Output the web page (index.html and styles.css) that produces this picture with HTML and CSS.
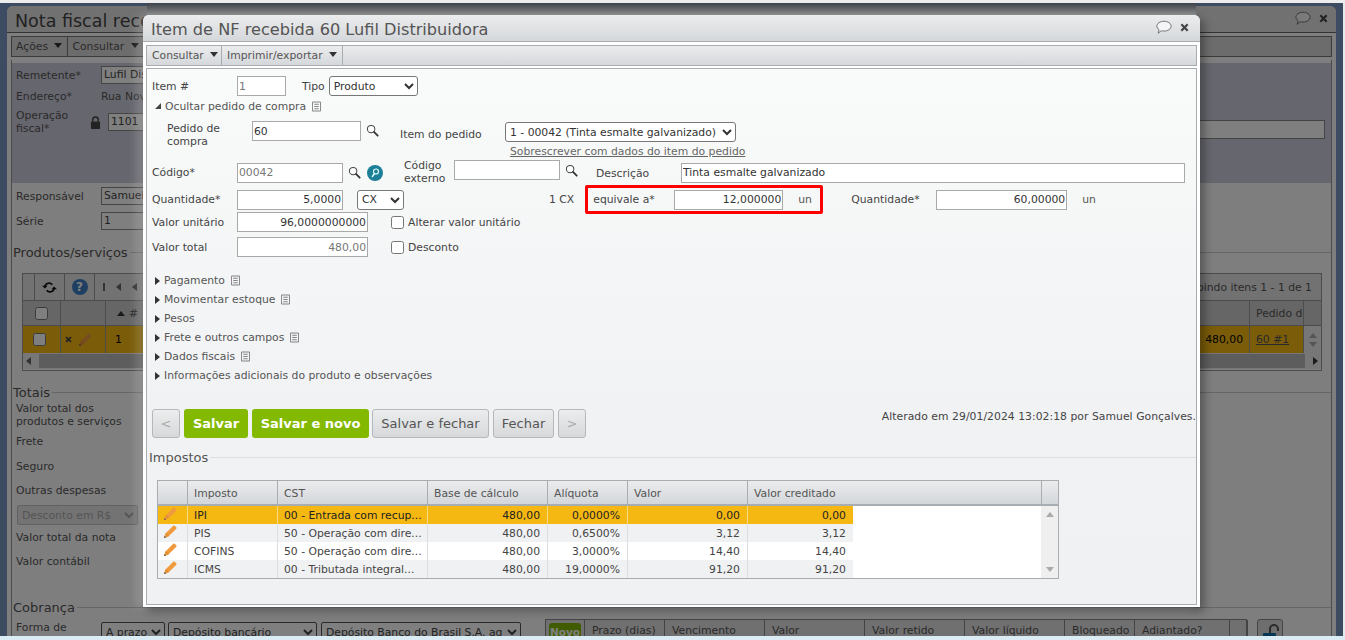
FILE: index.html
```html
<!DOCTYPE html>
<html lang="pt-BR">
<head>
<meta charset="utf-8">
<title>Item de NF recebida</title>
<link rel="stylesheet" href="styles.css">
</head>
<body>
<svg class="defs" xmlns="http://www.w3.org/2000/svg">
  <symbol id="lens" viewBox="0 0 14 14"><circle cx="5.500" cy="5.500" r="4" fill="#fff" stroke="#444" stroke-width="1.100"/><path d="M8.600 8.600l4 4" stroke="#333" stroke-width="1.900" stroke-linecap="round"/></symbol>
  <symbol id="note" viewBox="0 0 10 11"><path d="M.5.5h9v10h-9z" fill="none" stroke="#777"/><path d="M2.500 3h5M2.500 5.500h5M2.500 8h5" stroke="#777"/></symbol>
  <symbol id="pencil" viewBox="0 0 14 14"><path d="M1 13l1.200-4.200L10 1c.6-.6 1.200-.6 1.800-.1l1.300 1.200c.6.600.6 1.200 0 1.800L5.200 11.800z" fill="#f09a3e"/><path d="M2.800 8.600l2.600 2.600" stroke="#cf7a22" stroke-width=".8"/><path d="M1 13l.6-2.300 1.700 1.700z" fill="#6a5a48"/></symbol>
  <symbol id="bubble" viewBox="0 0 18 16"><path d="M9 1c4.300 0 8 2.300 8 5.500S13.300 12 9 12c-1 0-2-.1-3-.4L2.500 14.500l1-4C2 9.400 1 8 1 6.500 1 3.300 4.700 1 9 1z" fill="#f4f5f6" stroke="#666"/></symbol>
  <symbol id="close" viewBox="0 0 10 10"><path d="M1.500 1.500l7 7M8.500 1.500l-7 7" stroke="#444" stroke-width="2.400"/></symbol>
</svg>

<div class="strip-top"></div>
<div class="stage">
  <section class="bgwin">
    <header class="bg-title"><h1>Nota fiscal recebida</h1><span class="win-icons"><svg class="ic-bubble"><use href="#bubble"/></svg><svg class="ic-close"><use href="#close"/></svg></span></header>
    <nav class="bg-tools"><span class="tool t1">Ações <i class="tri-d"></i></span><span class="tool">Consultar <i class="tri-d"></i></span></nav>
    <div class="bg-band">
      <div class="b-row b-r1"><label class="b-lab">Remetente*</label><span class="b-field">Lufil Distribuidora</span></div>
      <div class="b-row b-r2"><label class="b-lab">Endereço*</label><span class="b-val">Rua Nova</span></div>
      <div class="b-row b-r3"><label class="b-lab b-two">Operação fiscal*</label><svg class="b-lock" viewBox="0 0 12 14"><path d="M3 6V4a3 3 0 016 0v2" fill="none" stroke="#444" stroke-width="1.600"/><rect x="1" y="6" width="10" height="8" rx="1" fill="#444"/></svg><span class="b-field b-op">1101</span><span class="b-field b-wide"></span></div>
    </div>
    <div class="b-row b-r4"><label class="b-lab">Responsável</label><span class="b-field">Samuel</span></div>
    <div class="b-row b-r5"><label class="b-lab">Série</label><span class="b-field">1</span></div>
    <div class="legend b-leg1"><span>Produtos/serviços</span></div>
    <div class="b-table">
      <div class="bt-tools"><span class="bt-sp1"></span><span class="bt-cell bt-ref"><svg viewBox="0 0 16 14"><path d="M3 6a4.500 4.500 0 018-2M13 8a4.500 4.500 0 01-8 2" fill="none" stroke="#111" stroke-width="1.800"/><path d="M0 5h6L3 8zM16 9h-6l3-3z" fill="#111"/></svg></span><span class="bt-cell bt-help">?</span><span class="bt-pager"><i class="bar"></i><i class="tri-l"></i><i class="tri-l"></i></span><span class="bt-show">Exibindo itens 1 - 1 de 1</span></div>
      <div class="bt-head"><span class="c-chk"><input type="checkbox"></span><span class="c-act"></span><span class="c-num"><i class="tri-u"></i> #</span><span class="c-fill"></span><span class="c-ped">Pedido de</span><span class="c-sb"></span></div>
      <div class="bt-row"><span class="c-chk"><input type="checkbox"></span><span class="c-act"><svg class="ic-x"><use href="#close"/></svg><svg class="ic-pen"><use href="#pencil"/></svg></span><span class="c-num">1</span><span class="c-fill c-amt">480,00</span><span class="c-ped"><a>60 #1</a></span><span class="c-sb c-sbv"><i class="tri-u"></i><i class="tri-dn"></i></span></div>
      <div class="bt-scroll"><i class="tri-l"></i><b></b><i class="tri-r"></i></div>
    </div>
    <div class="legend b-leg2"><span>Totais</span></div>
    <div class="b-col">
      <p class="p1">Valor total dos<br>produtos e serviços</p>
      <p class="p2">Frete</p><p class="p5">Seguro</p><p class="p3">Outras despesas</p>
      <select class="b-desc" disabled><option>Desconto em R$</option></select>
      <p class="p4">Valor total da nota</p><p class="p3">Valor contábil</p>
    </div>
    <div class="legend b-leg3"><span>Cobrança</span></div>
    <div class="b-bottom">
      <span class="b-forma">Forma de</span>
      <select class="s1"><option>A prazo</option></select><select class="s2"><option>Depósito bancário</option></select><select class="s3"><option>Depósito Banco do Brasil S.A. ag</option></select>
      <div class="b-ct"><span class="ct-new"><b>Novo</b></span><span class="w80">Prazo (dias)</span><span class="w100">Vencimento</span><span class="w100">Valor</span><span class="w100">Valor retido</span><span class="w100">Valor líquido</span><span class="w70">Bloqueado</span><span class="w95">Adiantado?</span><span class="w18"></span></div>
      <span class="b-lockbtn"><svg viewBox="0 0 18 20"><path d="M8 9V5a4 4 0 018 0v2" fill="none" stroke="#555" stroke-width="2"/><rect x="1" y="9" width="13" height="10" rx="1" fill="#0c6ea8"/><circle cx="7.500" cy="14" r="1.500" fill="#123"/></svg></span>
    </div>
  </section>

  <div class="overlay"></div>

  <section class="modal">
    <header class="m-title"><h2>Item de NF recebida 60 Lufil Distribuidora</h2><span class="win-icons"><svg class="ic-bubble"><use href="#bubble"/></svg><svg class="ic-close"><use href="#close"/></svg></span></header>
    <nav class="m-tools"><span class="mt mt1">Consultar <i class="tri-d"></i></span><span class="mt mt2">Imprimir/exportar <i class="tri-d"></i></span></nav>
    <div class="m-body">
      <div class="row r1">
        <label class="lab w85">Item #</label><input class="inp w49 grayval" value="1">
        <label class="lab ml16">Tipo</label><select class="sel w89 ml4"><option>Produto</option></select>
      </div>
      <div class="toggle r2"><i class="tri-dd"></i><span>Ocultar pedido de compra</span><svg class="note"><use href="#note"/></svg></div>
      <div class="row r3">
        <label class="lab two ped">Pedido de compra</label><input class="inp w109 r3i" value="60"><svg class="lens r3l"><use href="#lens"/></svg>
        <label class="lab itm">Item do pedido</label>
        <div class="r3c"><select class="sel w231"><option>1 - 00042 (Tinta esmalte galvanizado)</option></select><a class="over">Sobrescrever com dados do item do pedido</a></div>
      </div>
      <div class="row r4">
        <label class="lab w85">Código*</label><input class="inp w106 grayval" value="00042"><svg class="lens ml5"><use href="#lens"/></svg>
        <svg class="teal" viewBox="0 0 16 16"><circle cx="8" cy="8" r="8" fill="#1d7f97"/><circle cx="9" cy="6.500" r="2.500" fill="none" stroke="#dff" stroke-width="1.200"/><path d="M7.500 8.500L5 12" stroke="#dff" stroke-width="1.400"/></svg>
        <label class="lab two ext">Código externo</label><input class="inp w106 r4e"><svg class="lens ml5 r4l"><use href="#lens"/></svg>
        <label class="lab desc">Descrição</label><input class="inp w504" value="Tinta esmalte galvanizado">
      </div>
      <div class="row r5">
        <label class="lab w85">Quantidade*</label><input class="inp w106 num" value="5,0000"><select class="sel w47 ml14"><option>CX</option></select>
        <span class="lab cx">1 CX</span>
        <div class="redbox"><label class="lab eq">equivale a*</label><input class="inp w109 num" value="12,000000"><span class="un">un</span></div>
        <label class="lab q2">Quantidade*</label><input class="inp w131 num" value="60,00000"><span class="un un2">un</span>
      </div>
      <div class="row r6">
        <label class="lab w85">Valor unitário</label><input class="inp w131 num" value="96,0000000000"><input class="chk" type="checkbox"><label class="lab ml4">Alterar valor unitário</label>
      </div>
      <div class="row r7">
        <label class="lab w85">Valor total</label><input class="inp w131 num grayval" value="480,00"><input class="chk" type="checkbox"><label class="lab ml4">Desconto</label>
      </div>
      <ul class="secs">
        <li><i class="tri-r"></i><span>Pagamento</span><svg class="note"><use href="#note"/></svg></li>
        <li><i class="tri-r"></i><span>Movimentar estoque</span><svg class="note"><use href="#note"/></svg></li>
        <li><i class="tri-r"></i><span>Pesos</span></li>
        <li><i class="tri-r"></i><span>Frete e outros campos</span><svg class="note"><use href="#note"/></svg></li>
        <li><i class="tri-r"></i><span>Dados fiscais</span><svg class="note"><use href="#note"/></svg></li>
        <li><i class="tri-r"></i><span>Informações adicionais do produto e observações</span></li>
      </ul>
      <div class="actions">
        <button class="btn nav dis">&lt;</button>
        <button class="btn green b-s">Salvar</button>
        <button class="btn green b-sn">Salvar e novo</button>
        <button class="btn gray b-sf">Salvar e fechar</button>
        <button class="btn gray b-f">Fechar</button>
        <button class="btn nav dis">&gt;</button>
        <span class="status">Alterado em 29/01/2024 13:02:18 por Samuel Gonçalves.</span>
      </div>
      <div class="legend m-leg"><span>Impostos</span></div>
      <div class="tax">
        <div class="t-head"><span></span><span>Imposto</span><span>CST</span><span>Base de cálculo</span><span>Alíquota</span><span>Valor</span><span>Valor creditado</span><span></span></div>
        <div class="t-wrap">
          <div class="t-rows">
            <div class="t-row sel-row"><span><svg class="pen"><use href="#pencil"/></svg></span><span>IPI</span><span>00 - Entrada com recup...</span><span class="n">480,00</span><span class="n">0,0000%</span><span class="n">0,00</span><span class="n">0,00</span></div>
            <div class="t-row alt"><span><svg class="pen"><use href="#pencil"/></svg></span><span>PIS</span><span>50 - Operação com dire...</span><span class="n">480,00</span><span class="n">0,6500%</span><span class="n">3,12</span><span class="n">3,12</span></div>
            <div class="t-row"><span><svg class="pen"><use href="#pencil"/></svg></span><span>COFINS</span><span>50 - Operação com dire...</span><span class="n">480,00</span><span class="n">3,0000%</span><span class="n">14,40</span><span class="n">14,40</span></div>
            <div class="t-row alt"><span><svg class="pen"><use href="#pencil"/></svg></span><span>ICMS</span><span>00 - Tributada integral...</span><span class="n">480,00</span><span class="n">19,0000%</span><span class="n">91,20</span><span class="n">91,20</span></div>
          </div>
          <div class="t-sb"><i class="tri-u"></i><i class="tri-dn"></i></div>
        </div>
      </div>
    </div>
  </section>
</div>
<div class="strip-bottom"></div>
</body>
</html>
```
FILE: styles.css
```css
* { box-sizing: border-box; }
html, body { margin: 0; height: 640px; overflow: hidden; }
body { background: #e6eaec; font: 10.800px/13px "DejaVu Sans", Verdana, sans-serif; color: #444; }
.defs { display: none; }
h1, h2, p, ul { margin: 0; padding: 0; font-weight: normal; }
i { display: inline-block; }
.strip-top { height: 3px; background: #ededed; }
.strip-bottom { height: 4px; background: #dcecf4; }
.stage { position: relative; width: 1343px; height: 633px; overflow: hidden; background: linear-gradient(#7a98c6, #7896c0); }
.overlay { position: absolute; inset: 0; background: rgba(0, 0, 0, .5); }

/* triangles */
.tri-d { width: 0; height: 0; border: 4px solid transparent; border-top: 5px solid #333; border-bottom: 0; vertical-align: 2px; margin-left: 3px; }
.tri-r { width: 0; height: 0; border: 4px solid transparent; border-left: 5px solid #333; border-right: 0; }
.tri-l { width: 0; height: 0; border: 4px solid transparent; border-right: 5px solid #666; border-left: 0; }
.tri-u { width: 0; height: 0; border: 4px solid transparent; border-bottom: 5px solid #aaa; border-top: 0; }
.tri-dn { width: 0; height: 0; border: 4px solid transparent; border-top: 5px solid #aaa; border-bottom: 0; }
.tri-dd { width: 0; height: 0; border-style: solid; border-width: 0 0 6px 6px; border-color: transparent transparent #444 transparent; }

/* background window */
.bgwin { position: absolute; z-index: 0; left: 7px; top: 3px; width: 1329px; height: 630px; background: #fdfdfd; border-radius: 6px 6px 0 0; color: #555; }
.bgwin::after { content: ""; position: absolute; left: 4px; right: 4px; top: 54px; bottom: 0; border-left: 1px solid #999; border-right: 1px solid #999; }
.bg-title { height: 27px; display: flex; justify-content: space-between; background: #e2e2e2; border-bottom: 1px solid #666; border-radius: 6px 6px 0 0; padding: 0 8px 0 8px; }
.bg-title h1 { font-size: 17.500px; line-height: 30px; color: #444; }
.win-icons { display: flex; align-items: center; gap: 8px; }
.ic-bubble { width: 16px; height: 15px; }
.ic-close { width: 9px; height: 9px; }
.bgwin .win-icons { margin-top: -2px; }
.bg-tools { margin: 3px 4px 0; height: 21px; background: #d9d9d9; border: 1px solid #777; display: flex; align-items: center; color: #555; }
.tool { padding: 0 5px 0 4px; height: 100%; line-height: 19px; border-right: 1px solid #777; }
.t1 { padding-right: 5px; }
.bg-band { margin: 6px 4px 0; height: 120px; background: #cdcddc; padding-left: 5px; }
.b-row { display: flex; align-items: center; }
.b-lab { width: 85px; flex: none; }
.b-field { height: 18px; width: 200px; border: 1px solid #888; background: #fff; line-height: 16px; padding-left: 2px; color: #444; flex: none; }
.b-r1 { height: 18px; padding-top: 0; position: relative; top: 3px; }
.b-r2 { height: 18px; margin-top: 6px; }
.b-r3 { height: 20px; margin-top: 7px; }
.b-two { width: 60px; }
.b-lock { width: 11px; height: 13px; margin: 0 7px 0 14px; flex: none; }
.b-op { width: 60px; }
.b-wide { width: 1153px; margin: 15px 0 0 4px; height: 19px; }
.bgwin > .b-row { padding-left: 9px; }
.b-r4 { height: 20px; margin-top: 3px; }
.b-r5 { height: 20px; margin-top: 5px; }
.legend { display: flex; align-items: center; gap: 2px; }
.legend::after { content: ""; flex: 1; border-top: 1px solid #ccc; }
.bgwin .legend { font-size: 13px; margin: 0 4px 0 6px; color: #555; height: 16px; }
.b-leg1 { margin-top: 13px !important; }
.b-table { margin: 13px 0 0 15px; width: 1300px; height: 98px; border: 1px solid #999; background: #fff; }
.bt-tools { height: 27px; display: flex; align-items: center; background: #e4e4e4; border-bottom: 1px solid #999; }
.bt-sp1 { width: 12px; height: 100%; border-right: 1px solid #999; }
.bt-cell { width: 30px; height: 100%; border-right: 1px solid #999; display: flex; align-items: center; justify-content: center; }
.bt-ref svg { width: 15px; height: 13px; }
.bt-help { color: #fff; font-weight: bold; font-size: 12px; position: relative; z-index: 0; }
.bt-help::after { content: ""; position: absolute; width: 16px; height: 16px; border-radius: 50%; background: #3f7fc4; z-index: -1; }
.bt-pager { display: flex; gap: 11px; align-items: center; margin-left: 8px; flex: 1; }
.bar { width: 2px; height: 8px; background: #666; }
.bt-show { padding-right: 9px; color: #555; }
.bt-head, .bt-row { display: flex; align-items: center; height: 25px; border-bottom: 1px solid #999; background: #ccc; }
.bt-row { height: 27px; background: #f5b813; color: #000; border-bottom: 0; }
.bt-head > span, .bt-row > span { height: 100%; display: flex; align-items: center; border-right: 1px solid #999; flex: none; }
.bgwin input[type=checkbox] { margin: 0; width: 13px; height: 13px; }
.c-chk { width: 38px; justify-content: center; }
.bt-row .c-chk { padding-right: 4px; }
.c-act { width: 45px; gap: 6px; padding-left: 4px; }
.ic-x { width: 7px; height: 7px; }
.ic-x, .ic-pen { flex: none; }
.ic-pen { width: 14px; height: 14px; }
.c-num { width: 80px; gap: 4px; padding-left: 9px; justify-content: flex-start; }
.bt-head .c-num { padding-left: 11px; }
.c-num .tri-u { border-bottom-color: #333; }
.c-fill { width: 1064px; justify-content: flex-end; padding-right: 6px; }
.c-ped { width: 54px; padding-left: 6px; overflow: hidden; white-space: nowrap; color: #555; }
.c-ped a { text-decoration: underline; color: #555; }
.c-sb { width: 17px; border-right: 0 !important; }
.c-sbv { flex-direction: column; justify-content: center; gap: 4px; background: #eee; }
.bt-scroll { height: 16px; background: #eee; display: flex; align-items: center; padding: 0 3px; gap: 8px; }
.bt-scroll b { flex: 1; height: 14px; background: #bbb; }
.b-leg2 { margin-top: 13px !important; }
.b-col { padding-left: 9px; }
.p1 { margin-top: 2px; }
.p2 { margin-top: 7px; }
.p3 { margin-top: 11px; }
.p5 { margin-top: 12px; }
.p4 { margin-top: 6px; }
.b-desc { display: block; margin: 8px 0 0 1px; width: 121px; height: 20px; font: inherit; color: #888; background: #ddd; border: 1px solid #aaa; border-radius: 2px; }
.b-leg3 { margin-top: 31px !important; }
.b-bottom { display: flex; align-items: flex-start; padding-left: 9px; margin-top: 2px; }
.b-forma { width: 85px; flex: none; padding-top: 4px; }
.b-bottom select { height: 20px; font: inherit; margin-right: 3px; padding: 0; border: 1px solid #555; border-radius: 2px; background: #fff; color: #444; margin-top: 5px; flex: none; }
.b-bottom .s2 { margin-right: 4px; }
.s1 { width: 64px; } .s2 { width: 149px; } .s3 { width: 200px; }
.b-ct { position: absolute; left: 538px; top: 613px; width: 702px; height: 40px; border: 1px solid #888; background: #e0e0e0; display: flex; }
.b-ct > span { flex: none; height: 100%; border-right: 1px solid #888; padding: 4px 0 0 7px; }
.ct-new { width: 39px; padding: 3px !important; }
.ct-new b { display: block; background: #83b900; color: #fff; height: 30px; border-radius: 3px; line-height: 18px; font-size: 10.500px; text-align: center; }
.w80 { width: 80px; } .w100 { width: 100px; } .w70 { width: 70px; } .w95 { width: 95px; } .w18 { width: 18px; }
.b-lockbtn { position: absolute; left: 1250px; top: 613px; width: 26px; height: 40px; border: 1px solid #888; border-radius: 3px; background: #ddd; }
.b-lockbtn svg { width: 18px; height: 20px; display: block; margin: 4px 0 0 4px; }

/* modal */
.modal { position: absolute; left: 143px; top: 12px; width: 1057px; height: 592px; background: #fff; border-radius: 6px 6px 0 0; box-shadow: 4px 4px 10px rgba(0, 0, 0, .35), -6px 0 10px rgba(255, 255, 255, .2); padding: 0 3px 3px; display: flex; flex-direction: column; }
.modal::before { content: ""; position: absolute; left: 4px; right: 4px; top: -12px; height: 12px; background: linear-gradient(#3c4248, #8c8c8c); }
.m-title { height: 27px; margin: 0 -3px; display: flex; justify-content: space-between; padding: 0 11px 0 8px; background: linear-gradient(#ebeced, #d5d8db); border-bottom: 1px solid #a8adb2; border-radius: 6px 6px 0 0; flex: none; }
.m-title h2 { font-size: 16.150px; line-height: 30px; color: #555; }
.m-title .win-icons { margin-top: -1px; }
.m-tools { flex: none; margin-top: 3px; height: 21px; border: 1px solid #a8adb2; background: linear-gradient(#ebeced, #d5d8db); display: flex; color: #555; }
.mt { height: 100%; line-height: 19px; border-right: 1px solid #a8adb2; padding: 0 0 0 5px; }
.mt1 { width: 75px; }
.mt2 { width: 121px; }
.m-body { flex: none; height: 537px; margin-top: 2px; border: 1px solid #a8adb2; background: linear-gradient(#f9fbfa, #f1f2f4 62%, #f0f1f3); padding: 7px 0 0 5px; position: relative; }
.row { display: flex; align-items: center; }
.lab { flex: none; color: #444; white-space: nowrap; }
.two { white-space: normal; }
.w85 { width: 85px; }
.w49 { width: 49px; } .w47 { width: 47px; } .w89 { width: 89px; } .w106 { width: 106px; } .w109 { width: 109px; } .w131 { width: 131px; } .w231 { width: 231px; } .w504 { width: 504px; }
.ml16 { margin-left: 16px; } .ml5 { margin-left: 5px; } .ml14 { margin-left: 14px; } .ml4 { margin-left: 4px; }
.inp { flex: none; height: 20px; border: 1px solid #a9a9a9; background: #fff; font: 10.800px/18px "DejaVu Sans", Verdana, sans-serif; color: #333; padding: 0 1px; outline: 0; border-radius: 0; }
.num { text-align: right; }
.grayval { color: #777; }
.sel { flex: none; height: 20px; font: 10.800px "DejaVu Sans", Verdana, sans-serif; color: #333; border: 1px solid #777; border-radius: 3px; background: #fff; padding: 0; }
.lens { width: 13px; height: 13px; flex: none; }
.note { width: 9px; height: 11px; flex: none; margin-left: 6px; }
.r1 { height: 20px; }
.r2 { margin-top: 1px; }
.toggle { height: 18px; display: flex; align-items: center; padding-left: 3px; color: #555; }
.toggle .tri-dd { margin-right: 4px; }
.r3 { height: 40px; margin-top: 3px; align-items: flex-start; }
.ped { width: 85px; margin: 4px 0 0 15px; line-height: 13px; }
.r3i { margin: 3px 0 0 0; }
.r3l { margin: 6px 0 0 5px; }
.itm { margin: 10px 0 0 21px; width: 84px; }
.r3c { margin: 4px 0 0 21px; display: flex; flex-direction: column; }
.over { color: #666; text-decoration: underline; margin: 3px 0 0 5px; white-space: nowrap; }
.r4 { height: 23px; margin-top: 3px; }
.teal { width: 16px; height: 16px; flex: none; margin-left: 6px; }
.ext { width: 50px; margin-left: 21px; margin-top: -2px; }
.r4e, .r4l { margin-top: -5px; }
.desc { margin: 2px 0 0 18px; width: 85px; }
.r5 { height: 29px; margin-top: 1px; }
.cx { margin-left: 145px; }
.redbox { flex: none; display: flex; align-items: center; margin-left: 11px; width: 238px; height: 29px; border: 3px solid #f00; border-radius: 2px; }
.eq { width: 86px; padding-left: 5px; }
.un { margin-left: 15px; color: #555; }
.q2 { margin-left: 28px; width: 85px; }
.r6 { height: 20px; margin-top: -2px; }
.r7 { height: 20px; margin-top: 5px; }
.chk { margin: 0 0 0 23px; width: 13px; height: 13px; flex: none; }
.secs { list-style: none; margin-top: 14px; }
.secs li { height: 19px; display: flex; align-items: center; padding-left: 3px; color: #555; }
.secs .tri-r { margin-right: 4px; }
.actions { display: flex; align-items: center; gap: 4px; margin-top: 24px; height: 29px; position: relative; }
.btn { height: 29px; padding: 0; border-radius: 3px; font: 13px "DejaVu Sans", Verdana, sans-serif; flex: none; }
.nav { width: 28px; color: #aaa; background: linear-gradient(#eceded, #d6d8da); border: 1px solid #b5b8bb; }
.green { background: #83b900; color: #fff; border: 0; font-weight: bold; }
.b-s { width: 64px; } .b-sn { width: 117px; }
.gray { background: linear-gradient(#eceded, #d6d8da); border: 1px solid #b5b8bb; color: #555; }
.b-sf { width: 117px; margin-left: -1px; }
.b-f { width: 61px; }
.status { position: absolute; right: 0; top: 1px; color: #444; white-space: nowrap; letter-spacing: .04px; }
.m-leg { margin: 11px 0 0 -3px; height: 16px; font-size: 13px; color: #555; }
.m-leg::after { border-color: #dcdee0; }
.tax { margin: 15px 0 0 5px; width: 902px; height: 99px; border: 1px solid #a8adb2; background: #fff; }
.t-head { display: grid; grid-template-columns: 30px 90px 150px 120px 80px 120px 294px 16px; height: 25px; background: linear-gradient(#ebeced, #d3d6da); border-bottom: 2px solid #a8adb2; }
.t-head span { border-right: 1px solid #a8adb2; padding: 1px 0 0 6px; line-height: 24px; color: #555; }
.t-head span:last-child { border-right: 0; }
.t-wrap { display: flex; height: 72px; }
.t-rows { width: 883px; }
.t-row { display: grid; grid-template-columns: 30px 90px 150px 120px 80px 120px 105px; width: 695px; height: 18px; background: #fff; }
.t-row span { border-right: 1px solid #dcdee0; padding: 1px 0 0 6px; line-height: 17px; color: #444; white-space: nowrap; overflow: hidden; display: block; }
.t-row span:first-child { padding: 0 0 0 5px; }
.t-row span:last-child { border-right: 0; }
.t-row .n { text-align: right; padding: 1px 7px 0 0; }
.t-row.alt { background: #f0f1f3; }
.t-row.sel-row { background: #f5b813; }
.t-row.sel-row span { color: #222; border-right-color: #f9da8a; }
.pen { width: 14px; height: 14px; display: block; margin: 1px 0 0 0; }
.t-sb { width: 17px; background: #efefef; display: flex; flex-direction: column; justify-content: space-between; align-items: center; padding: 6px 0 6px; }
```
